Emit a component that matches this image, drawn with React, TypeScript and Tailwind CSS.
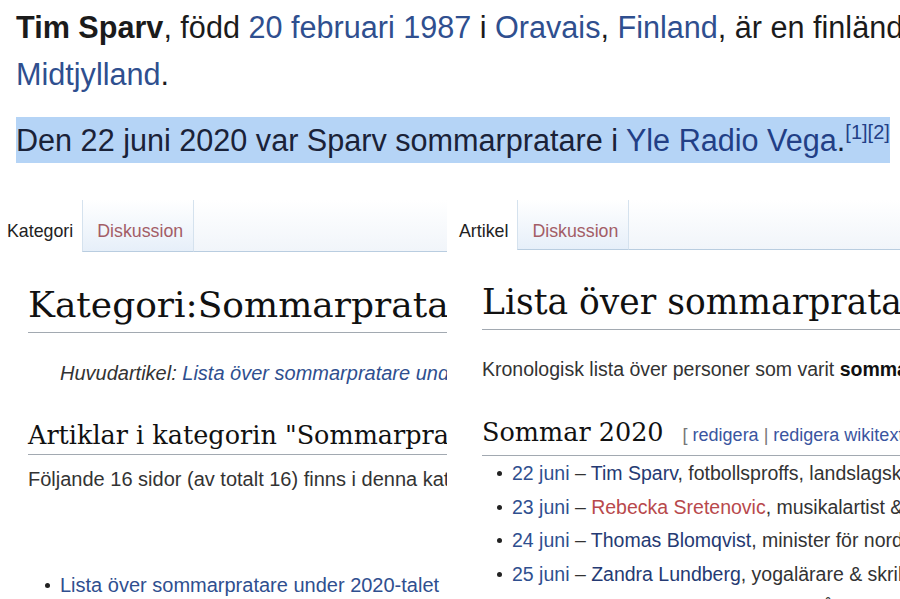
const link = "text-[#2f4f8f]";

function TabBar({ first, second, firstPad, h }: { first: string; second: string; firstPad: string; h: string }) {
  return (
    <div className={`flex ${h} text-[17.8px] leading-[22px]`}>
      <div className={`bg-white ${firstPad} pt-[20px] text-[#222]`}>{first}</div>
      <div className="bg-linear-to-b from-white to-[#e6eff9] border-x border-x-[#d5e2ee] border-b border-b-[#b9cde0] pt-[20px] pl-[14px] pr-[10px] text-[#a35d66]">
        {second}
      </div>
      <div className="flex-1 bg-linear-to-b from-white to-[#f1f5fa] border-b border-b-[#b9cde0]" />
    </div>
  );
}

function Dot() {
  return <span className="inline-block w-[5px] h-[5px] rounded-full bg-[#222] shrink-0" />;
}

export default function App() {
  return (
    <div className="w-[900px] h-[599px] overflow-hidden bg-white text-[#202122] font-['Liberation_Sans',Arial,sans-serif]">
      {/* Article excerpt */}
      <div className="pl-4 pt-[4px] text-[30.6px] leading-[47px] whitespace-nowrap text-[#1b1b1b]">
        <p>
          <b>Tim Sparv</b>, född <span className={link}>20 februari 1987</span> i{" "}
          <span className={link}>Oravais</span>, <span className={link}>Finland</span>, är en finländsk
          fotbollsspelare som spelar för FC
          <br />
          <span className={link}>Midtjylland</span>.
        </p>
        <p className="mt-[19px]">
          <span className="inline-block bg-[#b5d4f6] leading-[46px] text-[#1a2238]">
            Den 22 juni 2020 var Sparv sommarpratare i <span className="text-[#223f86]">Yle Radio Vega</span>.
            <sup className="text-[20px] -top-3 text-[#223f86]">[1][2]</sup>
          </span>
        </p>
      </div>

      {/* Two wiki panels */}
      <div className="flex mt-[16px]">
        {/* Category page */}
        <div className="w-[447px] shrink-0 overflow-hidden whitespace-nowrap">
          <div className="mt-[20px]">
            <TabBar first="Kategori" second="Diskussion" firstPad="pl-[7px] pr-[9px]" h="h-[52px]" />
          </div>
          <div className="pl-[28px]">
            <h1 className="mt-[30px] font-['DejaVu_Serif',Georgia,serif] text-[36px] leading-[45px] pb-[5px] border-b border-[#a2a9b1] text-[#111]">
              Kategori:Sommarpratare
            </h1>
            <p className="mt-[25px] ml-[32px] italic text-[20px] leading-[31px] text-[#333]">
              Huvudartikel: <span className={link}>Lista över sommarpratare under 2020-talet</span>
            </p>
            <h2 className="mt-[28px] font-['DejaVu_Serif',Georgia,serif] text-[25.5px] leading-[36px] pb-[1px] border-b border-[#a2a9b1] text-[#111]">
              Artiklar i kategorin "Sommarpratare"
            </h2>
            <p className="mt-[9px] text-[20px] leading-[31px] text-[#333]">
              Följande 16 sidor (av totalt 16) finns i denna kategori.
            </p>
            <div className="mt-[75px] flex items-center gap-[10px] pl-[17px] text-[20px] leading-[31px]">
              <Dot />
              <span className={link}>Lista över sommarpratare under 2020-talet</span>
            </div>
          </div>
        </div>

        {/* List article */}
        <div className="ml-[3px] w-[450px] shrink-0 overflow-hidden whitespace-nowrap">
          <div className="mt-[20px]">
            <TabBar first="Artikel" second="Diskussion" firstPad="pl-[9px] pr-[9px]" h="h-[50px]" />
          </div>
          <div className="pl-[32px]">
            <h1 className="mt-[30px] font-['DejaVu_Serif',Georgia,serif] text-[34.5px] leading-[45px] pb-[4px] border-b border-[#a2a9b1] text-[#111]">
              Lista över sommarpratare under 2020-talet
            </h1>
            <p className="mt-[24px] text-[19.5px] leading-[31px] text-[#333]">
              Kronologisk lista över personer som varit <b className="text-[#111]">sommarpratare</b> i Yle Vega.
            </p>
            <h2 className="mt-[29px] flex items-baseline pb-[2px] border-b border-[#a2a9b1] leading-[36px]">
              <span className="font-['DejaVu_Serif',Georgia,serif] text-[25.5px] text-[#111]">Sommar 2020</span>
              <span className="ml-[19px] text-[18px] text-[#777]">
                [ <span className="text-[#3a55a0]">redigera</span> | <span className="text-[#3a55a0]">redigera wikitext</span> ]
              </span>
            </h2>
            <ul className="mt-[2px] text-[19.5px] leading-[31px] text-[#333]">
              <li className="flex items-center gap-[10px] pl-[15px] mb-[2.5px]">
                <Dot />
                <span>
                  <span className={link}>22 juni</span> – <span className="text-[#253a73]">Tim Sparv</span>, fotbollsproffs, landslagskapten
                </span>
              </li>
              <li className="flex items-center gap-[10px] pl-[15px] mb-[2.5px]">
                <Dot />
                <span>
                  <span className={link}>23 juni</span> – <span className="text-[#b8494c]">Rebecka Sretenovic</span>, musikalartist & skådespelare
                </span>
              </li>
              <li className="flex items-center gap-[10px] pl-[15px] mb-[2.5px]">
                <Dot />
                <span>
                  <span className={link}>24 juni</span> – <span className="text-[#253a73]">Thomas Blomqvist</span>, minister för nordiskt samarbete
                </span>
              </li>
              <li className="flex items-center gap-[10px] pl-[15px] mb-[2.5px]">
                <Dot />
                <span>
                  <span className={link}>25 juni</span> – <span className="text-[#253a73]">Zandra Lundberg</span>, yogalärare & skribent
                </span>
              </li>
              <li className="flex items-center gap-[10px] pl-[15px] mb-[2.5px]">
                <Dot />
                <span>
                  <span className={link}>26 juni</span> – <span className="text-[#253a73]">Tobias Tillberg</span>, musiker & låtskrivare
                </span>
              </li>
            </ul>
          </div>
        </div>
      </div>
    </div>
  );
}
